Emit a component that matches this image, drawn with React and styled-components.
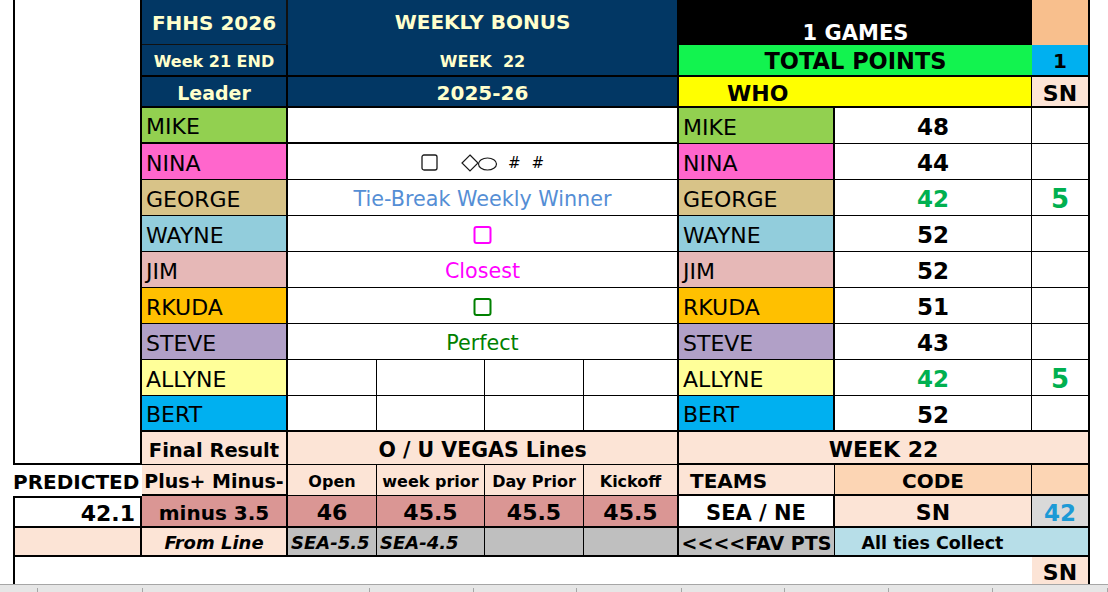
import React from 'react';
import styled, { createGlobalStyle } from 'styled-components';

const GlobalStyle = createGlobalStyle`
  html, body {
    margin: 0;
    padding: 0;
    background: #ffffff;
  }
  body {
    font-family: "DejaVu Sans", Verdana, sans-serif;
    color: #000;
  }
`;

const NAVY = '#023764';
const CREAM = '#FFFFCC';
const PEACH = '#FCE4D6';
const PEACH_DARK = '#FCD5B4';
const ROSE = '#DA9694';
const GRAY = '#BFBFBF';

const players = [
  { name: 'MIKE', bg: '#92D050', score: 48 },
  { name: 'NINA', bg: '#FF66CC', score: 44 },
  { name: 'GEORGE', bg: '#D8C388', score: 42, win: true },
  { name: 'WAYNE', bg: '#92CDDC', score: 52 },
  { name: 'JIM', bg: '#E6B8B7', score: 52 },
  { name: 'RKUDA', bg: '#FFC000', score: 51 },
  { name: 'STEVE', bg: '#B1A0C7', score: 43 },
  { name: 'ALLYNE', bg: '#FFFF99', score: 42, win: true },
  { name: 'BERT', bg: '#00B0F0', score: 52 },
];

const Page = styled.div`
  width: 1108px;
  height: 592px;
  overflow: hidden;
  display: flex;
  flex-direction: column;
`;

const Sheet = styled.div`
  display: grid;
  margin-left: 13px;
  grid-template-columns: 129px 146px 89px 108px 99px 95px 156px 197px 58px;
  grid-template-rows: 45px 32px 31px repeat(9, 36px) 33px 31px 32px 29px 27px;
  width: 1077px;
`;

const Cell = styled.div`
  box-sizing: border-box;
  grid-column: ${(p) => p.$c};
  grid-row: ${(p) => p.$r};
  display: flex;
  align-items: ${(p) => p.$valign || 'center'};
  justify-content: ${(p) => p.$align || 'center'};
  padding: ${(p) => p.$pad || '2px 0 0'};
  background: ${(p) => p.$bg || '#fff'};
  color: ${(p) => p.$color || '#000'};
  font-size: ${(p) => p.$size || 20}px;
  font-weight: ${(p) => (p.$light ? 400 : 700)};
  font-style: ${(p) => (p.$italic ? 'italic' : 'normal')};
  white-space: nowrap;
  overflow: visible;
  border-style: solid;
  border-color: ${(p) => p.$lineColor || '#000'};
  border-width: ${(p) => `${p.$bt || 0}px ${p.$br || 0}px ${p.$bb || 0}px ${p.$bl || 0}px`};
`;

const NavyCell = styled(Cell)`
  background: ${NAVY};
  color: ${CREAM};
`;

const NameCell = styled(Cell)`
  justify-content: flex-start;
  padding: 3px 0 0 4px;
  font-size: 22px;
  font-weight: 400;
`;

const ScoreCell = styled(Cell)`
  padding-top: 3px;
  font-size: ${(p) => p.$size || 23}px;
  color: ${(p) => (p.$win ? '#00B050' : '#000')};
`;

const Symbols = styled.div`
  display: flex;
  align-items: center;
  font-size: 15px;
  font-weight: 400;
`;

const Hash = styled.span`
  margin-left: ${(p) => p.$gap}px;
`;

const Footer = styled.div`
  display: flex;
  height: 8px;
  background: #E6E6E6;
  border-top: 1px solid #A6A6A6;
  box-sizing: border-box;
`;

const Tab = styled.div`
  width: ${(p) => p.$w}px;
  flex: ${(p) => (p.$w ? 'none' : 1)};
  margin-top: 3px;
  border-right: 1px solid #A6A6A6;
`;

function Box({ color }) {
  return (
    <svg width="19" height="18" viewBox="0 0 19 18">
      <rect x="1.5" y="1" width="16" height="16" rx="2" fill="none" stroke={color} strokeWidth="2" />
    </svg>
  );
}

function NinaSymbols() {
  return (
    <Symbols>
      <svg width="17" height="17" viewBox="0 0 17 17">
        <rect x="1" y="1" width="15" height="15" rx="2" fill="none" stroke="#1a1a1a" strokeWidth="1.3" />
      </svg>
      <svg width="37" height="18" viewBox="0 0 37 18" style={{ marginLeft: 23 }}>
        <path d="M9 1 L17 9 L9 17 L1 9 Z" fill="none" stroke="#1a1a1a" strokeWidth="1.2" />
        <ellipse cx="26.5" cy="10" rx="9" ry="6" fill="none" stroke="#1a1a1a" strokeWidth="1.2" />
      </svg>
      <Hash $gap={10}>#</Hash>
      <Hash $gap={11}>#</Hash>
    </Symbols>
  );
}

const middle = [
  null,
  <NinaSymbols />,
  'Tie-Break Weekly Winner',
  <Box color="#FF00FF" />,
  'Closest',
  <Box color="#008000" />,
  'Perfect',
];
const middleColor = ['#000', '#000', '#558ED5', '#FF00FF', '#FF00FF', '#008000', '#008000'];

export default function App() {
  const last = players.length - 1;
  return (
    <Page>
      <GlobalStyle />
      <Sheet>
        {/* left white block */}
        <Cell $c="1 / 2" $r="1 / 14" $bl={2} $br={2} $bb={2} />

        {/* top header */}
        <NavyCell $c="2 / 3" $r="1 / 2" $br={2} $bb={1} $lineColor="#111">FHHS 2026</NavyCell>
        <NavyCell $c="3 / 7" $r="1 / 2" $br={2} $valign="flex-start" $pad="10px 0 0">WEEKLY BONUS</NavyCell>
        <Cell $c="7 / 9" $r="1 / 2" $bg="#000" $color="#fff" $size={21} $valign="flex-end" $pad="0">1 GAMES</Cell>
        <Cell $c="9 / 10" $r="1 / 2" $bg="#F8BF8D" $br={2} />

        <NavyCell $c="2 / 3" $r="2 / 3" $br={2} $bb={2} $size={16}>Week 21 END</NavyCell>
        <NavyCell $c="3 / 7" $r="2 / 3" $br={2} $bb={2} $size={16}>WEEK&nbsp;&nbsp;22</NavyCell>
        <Cell $c="7 / 9" $r="2 / 3" $bg="#12F34F" $bb={2} $size={22.5}>TOTAL POINTS</Cell>
        <Cell $c="9 / 10" $r="2 / 3" $bg="#00B0F0" $br={2} $bb={2}>1</Cell>

        <NavyCell $c="2 / 3" $r="3 / 4" $br={2} $bb={2} $size={19}>Leader</NavyCell>
        <NavyCell $c="3 / 7" $r="3 / 4" $br={2} $bb={2}>2025-26</NavyCell>
        <Cell $c="7 / 9" $r="3 / 4" $bg="#FFFF00" $br={1} $bb={2} $size={22} $align="flex-start" $pad="3px 0 0 48px">WHO</Cell>
        <Cell $c="9 / 10" $r="3 / 4" $bg={PEACH} $br={2} $bb={2} $size={22} $pad="3px 0 0">SN</Cell>

        {/* player rows */}
        {players.map((p, i) => {
          const row = `${i + 4} / ${i + 5}`;
          const bb = i === 0 || i === last ? 2 : 1;
          const rb = i === last ? 2 : 1;
          return (
            <React.Fragment key={p.name}>
              <NameCell $c="2 / 3" $r={row} $bg={p.bg} $br={2} $bb={bb}>{p.name}</NameCell>
              {i < 7 ? (
                <Cell $c="3 / 7" $r={row} $br={2} $bb={bb} $light $size={20.7} $color={middleColor[i]}>
                  {middle[i]}
                </Cell>
              ) : (
                <>
                  <Cell $c="3 / 4" $r={row} $br={1} $bb={bb} />
                  <Cell $c="4 / 5" $r={row} $br={1} $bb={bb} />
                  <Cell $c="5 / 6" $r={row} $br={1} $bb={bb} />
                  <Cell $c="6 / 7" $r={row} $br={2} $bb={bb} />
                </>
              )}
              <NameCell $c="7 / 8" $r={row} $bg={p.bg} $br={2} $bb={rb}>{p.name}</NameCell>
              <ScoreCell $c="8 / 9" $r={row} $br={1} $bb={rb} $win={p.win}>{p.score}</ScoreCell>
              <ScoreCell $c="9 / 10" $r={row} $br={2} $bb={rb} $win $size={26}>{p.win ? 5 : ''}</ScoreCell>
            </React.Fragment>
          );
        })}

        {/* vegas lines block */}
        <Cell $c="2 / 3" $r="13 / 14" $bg={PEACH} $br={2} $bb={1} $size={19.5} $pad="4px 0 0">Final Result</Cell>
        <Cell $c="3 / 7" $r="13 / 14" $bg={PEACH} $br={2} $bb={1} $size={20.5} $pad="4px 0 0">O / U VEGAS Lines</Cell>
        <Cell $c="7 / 10" $r="13 / 14" $bg={PEACH} $br={2} $bb={2} $size={22} $pad="4px 0 0">WEEK 22</Cell>

        <Cell $c="1 / 2" $r="14 / 15" $bg="transparent" $align="flex-start">PREDICTED</Cell>
        <Cell $c="2 / 3" $r="14 / 15" $bg={PEACH} $br={2} $bb={2} $size={19}>Plus+ Minus-</Cell>
        <Cell $c="3 / 4" $r="14 / 15" $bg={PEACH} $br={1} $bb={1} $size={16}>Open</Cell>
        <Cell $c="4 / 5" $r="14 / 15" $bg={PEACH} $br={1} $bb={1} $size={16}>week prior</Cell>
        <Cell $c="5 / 6" $r="14 / 15" $bg={PEACH} $br={1} $bb={1} $size={16}>Day Prior</Cell>
        <Cell $c="6 / 7" $r="14 / 15" $bg={PEACH} $br={2} $bb={1} $size={16}>Kickoff</Cell>
        <Cell $c="7 / 8" $r="14 / 15" $bg={PEACH} $br={1} $bb={2} $align="flex-start" $pad="2px 0 0 11px">TEAMS</Cell>
        <Cell $c="8 / 9" $r="14 / 15" $bg={PEACH_DARK} $br={1} $bb={2}>CODE</Cell>
        <Cell $c="9 / 10" $r="14 / 15" $bg={PEACH_DARK} $br={2} $bb={2} />

        <Cell $c="1 / 2" $r="15 / 16" $bl={2} $br={2} $bb={2} $bt={2} $size={22} $align="flex-end" $pad="3px 5px 0 0">42.1</Cell>
        <Cell $c="2 / 3" $r="15 / 16" $bg={ROSE} $br={2} $bb={2} $pad="3px 0 0">minus 3.5</Cell>
        <Cell $c="3 / 4" $r="15 / 16" $bg={ROSE} $br={1} $bb={2} $size={22} $pad="3px 0 0">46</Cell>
        <Cell $c="4 / 5" $r="15 / 16" $bg={ROSE} $br={1} $bb={2} $size={22} $pad="3px 0 0">45.5</Cell>
        <Cell $c="5 / 6" $r="15 / 16" $bg={ROSE} $br={1} $bb={2} $size={22} $pad="3px 0 0">45.5</Cell>
        <Cell $c="6 / 7" $r="15 / 16" $bg={ROSE} $br={2} $bb={2} $size={22} $pad="3px 0 0">45.5</Cell>
        <Cell $c="7 / 8" $r="15 / 16" $br={2} $bb={2} $size={21} $pad="3px 0 0">SEA / NE</Cell>
        <Cell $c="8 / 9" $r="15 / 16" $bg={PEACH} $br={1} $bb={2} $size={22} $pad="3px 0 0">SN</Cell>
        <Cell $c="9 / 10" $r="15 / 16" $bg="#D9D9D9" $color="#1C9AD6" $br={2} $bb={2} $size={23} $pad="3px 0 0">42</Cell>

        <Cell $c="1 / 2" $r="16 / 17" $bg={PEACH} $bl={2} $br={2} $bb={2} />
        <Cell $c="2 / 3" $r="16 / 17" $bg={PEACH} $br={2} $bb={2} $size={18} $italic>From Line</Cell>
        <Cell $c="3 / 4" $r="16 / 17" $bg={GRAY} $br={1} $bb={2} $size={18} $italic $align="flex-start" $pad="2px 0 0 3px">SEA-5.5</Cell>
        <Cell $c="4 / 5" $r="16 / 17" $bg={GRAY} $br={1} $bb={2} $size={18} $italic $align="flex-start" $pad="2px 0 0 3px">SEA-4.5</Cell>
        <Cell $c="5 / 6" $r="16 / 17" $bg={GRAY} $br={1} $bb={2} />
        <Cell $c="6 / 7" $r="16 / 17" $bg={GRAY} $br={2} $bb={2} />
        <Cell $c="7 / 8" $r="16 / 17" $bg={GRAY} $br={1} $bb={2} $size={19}>&lt;&lt;&lt;&lt;FAV PTS</Cell>
        <Cell $c="8 / 10" $r="16 / 17" $bg="#B7DEE8" $br={2} $bb={2} $size={17.5} $pad="2px 58px 0 0">All ties Collect</Cell>

        <Cell $c="1 / 9" $r="17 / 18" $bl={2} />
        <Cell $c="9 / 10" $r="17 / 18" $bg={PEACH} $br={2} $size={22} $pad="3px 0 0">SN</Cell>
      </Sheet>
      <Footer>
        <Tab $w={37} />
        <Tab $w={104} />
        <Tab $w={226} />
        <Tab $w={103} />
        <Tab $w={102} />
        <Tab $w={104} />
        <Tab $w={102} />
        <Tab $w={103} />
        <Tab $w={103} />
        <Tab />
      </Footer>
    </Page>
  );
}
